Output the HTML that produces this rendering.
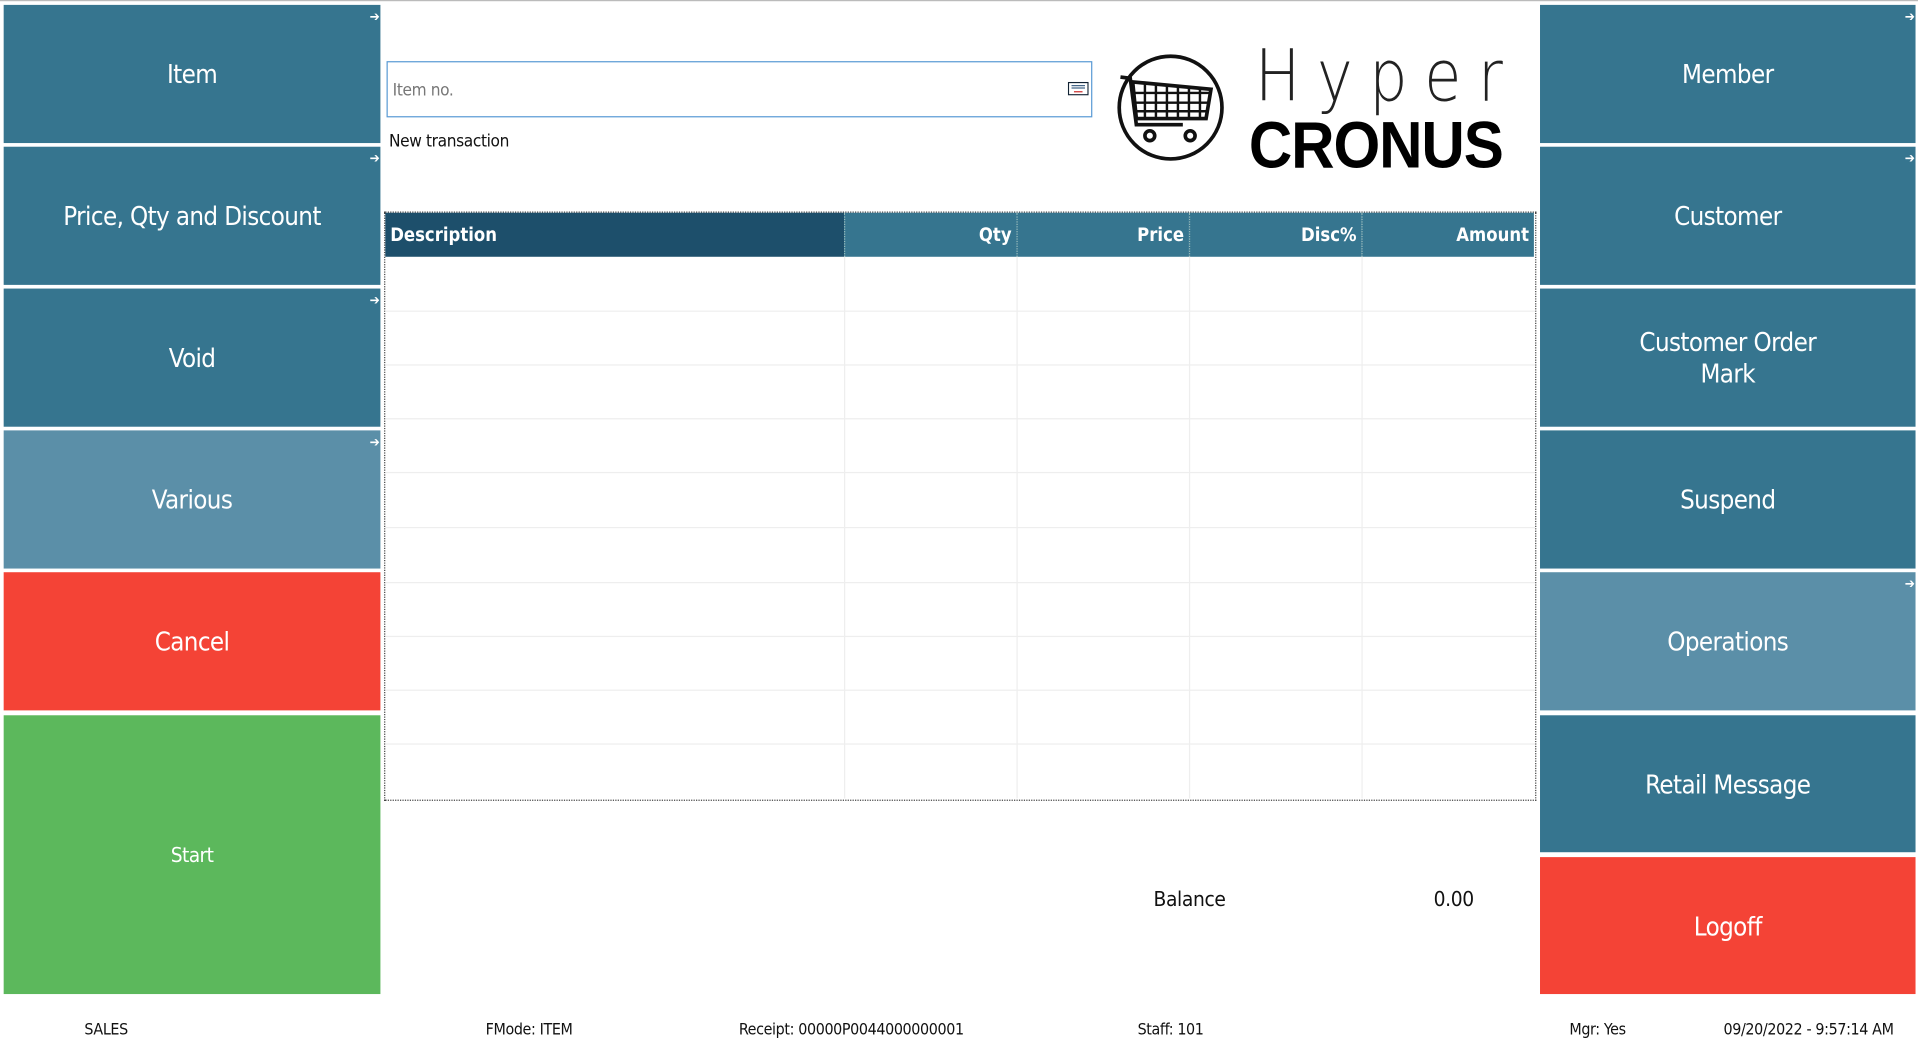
<!DOCTYPE html>
<html><head><meta charset="utf-8"><style>
html,body{margin:0;padding:0;width:1918px;height:1054px;overflow:hidden;background:#fff}
#w{position:absolute;left:0;top:0;width:1568px;height:862px;transform:scale(1.2232,1.2227);transform-origin:0 0;font-family:"DejaVu Sans Condensed","Liberation Sans Narrow","Liberation Sans",sans-serif}
.b{position:absolute;color:#fff;display:flex;align-items:center;justify-content:center;text-align:center;font-size:21px;line-height:26px;letter-spacing:-0.5px;padding-top:1px;box-sizing:border-box}
.L{left:3px;width:308px}.R{left:1259px;width:307px}
.bl{background:#36758f}.lb{background:#5b8fa8}.rd{background:#f44336}.gr{background:#5cb85c}
.ar{position:absolute;right:1px;top:-3px;font-size:11px;font-weight:bold}
.t{position:absolute;font-size:14px;color:#111;letter-spacing:-0.3px}
.hd{position:absolute;top:174px;height:36px;color:#fff;font-weight:bold;font-size:15px;line-height:37px;box-sizing:border-box;padding:0 4px;background:#36758f;text-align:right;border-left:1px dotted #9bb}
.vl{position:absolute;top:210px;height:443px;border-left:1px solid #eee}
.hl{position:absolute;left:315px;width:940px;border-top:1px solid #eee}
</style></head><body><div id="w">
<div style="position:absolute;left:0;top:0;width:1568px;height:1px;background:#bbb"></div>
<div class="b L bl" style="top:4px;height:113px">Item<span class="ar">➔</span></div>
<div class="b L bl" style="top:120px;height:113px">Price, Qty and Discount<span class="ar">➔</span></div>
<div class="b L bl" style="top:236px;height:113px">Void<span class="ar">➔</span></div>
<div class="b L lb" style="top:352px;height:113px">Various<span class="ar">➔</span></div>
<div class="b L rd" style="top:468px;height:113px">Cancel</div>
<div class="b L gr" style="top:585px;height:228px;font-size:17px">Start</div>
<div class="b R bl" style="top:4px;height:113px">Member<span class="ar">➔</span></div>
<div class="b R bl" style="top:120px;height:113px">Customer<span class="ar">➔</span></div>
<div class="b R bl" style="top:236px;height:113px">Customer Order<br>Mark</div>
<div class="b R bl" style="top:352px;height:113px">Suspend</div>
<div class="b R lb" style="top:468px;height:113px">Operations<span class="ar">➔</span></div>
<div class="b R bl" style="top:585px;height:112px">Retail Message</div>
<div class="b R rd" style="top:701px;height:112px">Logoff</div>
<div style="position:absolute;left:316px;top:50px;width:575px;height:44px;border:1px solid #5b9bd5"></div>
<div class="t" style="left:321px;top:66px;color:#777">Item no.</div>
<svg style="position:absolute;left:873px;top:67px" width="17" height="11"><rect x="0.5" y="0.5" width="16" height="10" fill="#fff" stroke="#123"/><path d="M3 3h11M3 5h11" stroke="#468" stroke-width="1"/><path d="M5 8h7" stroke="#c33"/></svg>
<div class="t" style="left:318px;top:108px">New transaction</div>
<svg style="position:absolute;left:912px;top:43px" width="92" height="92" viewBox="0 0 92 92"><circle cx="45" cy="45" r="42" fill="none" stroke="#111" stroke-width="3"/><path d="M4 20l8 1 5 38h38" fill="none" stroke="#111" stroke-width="3"/><path d="M14 24l64 6-4 24H17z" fill="none" stroke="#111" stroke-width="3"/><path d="M24 25v28M33 26v27M42 27v26M51 28v25M60 28v25M69 29v24M15 33h62M16 41h60M16 48h59" stroke="#111" stroke-width="2"/><circle cx="28" cy="68" r="4" fill="none" stroke="#111" stroke-width="3"/><circle cx="61" cy="68" r="4" fill="none" stroke="#111" stroke-width="3"/></svg>
<div style="position:absolute;left:1026px;top:28px;font-family:'DejaVu Sans',sans-serif;font-size:58px;font-weight:200;letter-spacing:16px;color:#222;transform:scaleX(0.85);transform-origin:0 0">Hyper</div>
<div style="position:absolute;left:1021px;top:88px;font-family:'Liberation Sans',sans-serif;font-size:54px;font-weight:bold;color:#000;letter-spacing:-1px;transform:scaleX(0.91);transform-origin:0 0">CRONUS</div>
<div style="position:absolute;left:314px;top:173px;width:940px;height:480px;border:1px dotted #444"></div>
<div class="hd" style="left:315px;width:375px;background:#1d4f6b;text-align:left;border:none">Description</div>
<div class="hd" style="left:690px;width:141px">Qty</div>
<div class="hd" style="left:831px;width:141px">Price</div>
<div class="hd" style="left:972px;width:141px">Disc%</div>
<div class="hd" style="left:1113px;width:141px">Amount</div>
<div class="vl" style="left:690px"></div><div class="vl" style="left:831px"></div><div class="vl" style="left:972px"></div><div class="vl" style="left:1113px"></div>
<div class="hl" style="top:254px"></div><div class="hl" style="top:298px"></div><div class="hl" style="top:342px"></div><div class="hl" style="top:386px"></div><div class="hl" style="top:431px"></div><div class="hl" style="top:476px"></div><div class="hl" style="top:520px"></div><div class="hl" style="top:564px"></div><div class="hl" style="top:608px"></div>
<div class="t" style="left:943px;top:726px;font-size:17px">Balance</div>
<div class="t" style="left:1172px;top:726px;font-size:17px">0.00</div>
<div class="t" style="left:69px;top:835px;font-size:13px">SALES</div>
<div class="t" style="left:397px;top:835px;font-size:13px">FMode: ITEM</div>
<div class="t" style="left:604px;top:835px;font-size:13px">Receipt: 00000P0044000000001</div>
<div class="t" style="left:930px;top:835px;font-size:13px">Staff: 101</div>
<div class="t" style="left:1283px;top:835px;font-size:13px">Mgr: Yes</div>
<div class="t" style="left:1409px;top:835px;font-size:13px">09/20/2022 - 9:57:14 AM</div>
</div></body></html>
